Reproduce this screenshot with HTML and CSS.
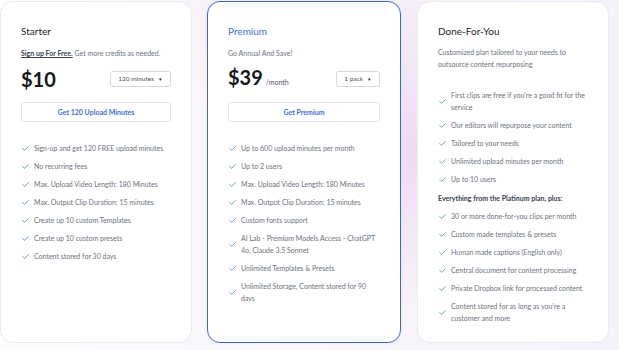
FILE: index.html
```html
<!DOCTYPE html>
<html>
<head>
<meta charset="utf-8">
<link rel="stylesheet" href="styles.css">
</head>
<body>
<div class="plans">
  <div class="card">
    <div class="name">Starter</div>
    <div class="sub"><span class="signup">Sign up For Free.</span> Get more credits as needed.</div>
    <div class="price-row">
      <div class="price">$10</div>
      <div class="select">120 minutes <span class="caret">▾</span></div>
    </div>
    <div class="btn">Get 120 Upload Minutes</div>
    <ul class="features">
      <li><svg class="chk" viewBox="0 0 8 6"><path d="M0.6 3.1 L2.9 5.2 L7.4 0.8"/></svg><span>Sign-up and get 120 FREE upload minutes</span></li>
      <li><svg class="chk" viewBox="0 0 8 6"><path d="M0.6 3.1 L2.9 5.2 L7.4 0.8"/></svg><span>No recurring fees</span></li>
      <li><svg class="chk" viewBox="0 0 8 6"><path d="M0.6 3.1 L2.9 5.2 L7.4 0.8"/></svg><span>Max. Upload Video Length: 180 Minutes</span></li>
      <li><svg class="chk" viewBox="0 0 8 6"><path d="M0.6 3.1 L2.9 5.2 L7.4 0.8"/></svg><span>Max. Output Clip Duration: 15 minutes</span></li>
      <li><svg class="chk" viewBox="0 0 8 6"><path d="M0.6 3.1 L2.9 5.2 L7.4 0.8"/></svg><span>Create up 10 custom Templates</span></li>
      <li><svg class="chk" viewBox="0 0 8 6"><path d="M0.6 3.1 L2.9 5.2 L7.4 0.8"/></svg><span>Create up 10 custom presets</span></li>
      <li><svg class="chk" viewBox="0 0 8 6"><path d="M0.6 3.1 L2.9 5.2 L7.4 0.8"/></svg><span>Content stored for 30 days</span></li>
    </ul>
  </div>
  <div class="card featured">
    <div class="name blue">Premium</div>
    <div class="sub">Go Annual And Save!</div>
    <div class="price-row">
      <div class="price">$39<span class="per">/month</span></div>
      <div class="select">1 pack <span class="caret">▾</span></div>
    </div>
    <div class="btn">Get Premium</div>
    <ul class="features">
      <li><svg class="chk" viewBox="0 0 8 6"><path d="M0.6 3.1 L2.9 5.2 L7.4 0.8"/></svg><span>Up to 600 upload minutes per month</span></li>
      <li><svg class="chk" viewBox="0 0 8 6"><path d="M0.6 3.1 L2.9 5.2 L7.4 0.8"/></svg><span>Up to 2 users</span></li>
      <li><svg class="chk" viewBox="0 0 8 6"><path d="M0.6 3.1 L2.9 5.2 L7.4 0.8"/></svg><span>Max. Upload Video Length: 180 Minutes</span></li>
      <li><svg class="chk" viewBox="0 0 8 6"><path d="M0.6 3.1 L2.9 5.2 L7.4 0.8"/></svg><span>Max. Output Clip Duration: 15 minutes</span></li>
      <li><svg class="chk" viewBox="0 0 8 6"><path d="M0.6 3.1 L2.9 5.2 L7.4 0.8"/></svg><span>Custom fonts support</span></li>
      <li><svg class="chk" viewBox="0 0 8 6"><path d="M0.6 3.1 L2.9 5.2 L7.4 0.8"/></svg><span>AI Lab - Premium Models Access - ChatGPT 4o, Claude 3.5 Sonnet</span></li>
      <li><svg class="chk" viewBox="0 0 8 6"><path d="M0.6 3.1 L2.9 5.2 L7.4 0.8"/></svg><span>Unlimited Templates &amp; Presets</span></li>
      <li><svg class="chk" viewBox="0 0 8 6"><path d="M0.6 3.1 L2.9 5.2 L7.4 0.8"/></svg><span>Unlimited Storage, Content stored for 90 days</span></li>
    </ul>
  </div>
  <div class="card">
    <div class="name">Done-For-You</div>
    <div class="sub desc">Customized plan tailored to your needs to outsource content repurposing</div>
    <ul class="features dfy">
      <li><svg class="chk" viewBox="0 0 8 6"><path d="M0.6 3.1 L2.9 5.2 L7.4 0.8"/></svg><span>First clips are free if you're a good fit for the service</span></li>
      <li><svg class="chk" viewBox="0 0 8 6"><path d="M0.6 3.1 L2.9 5.2 L7.4 0.8"/></svg><span>Our editors will repurpose your content</span></li>
      <li><svg class="chk" viewBox="0 0 8 6"><path d="M0.6 3.1 L2.9 5.2 L7.4 0.8"/></svg><span>Tailored to your needs</span></li>
      <li><svg class="chk" viewBox="0 0 8 6"><path d="M0.6 3.1 L2.9 5.2 L7.4 0.8"/></svg><span>Unlimited upload minutes per month</span></li>
      <li><svg class="chk" viewBox="0 0 8 6"><path d="M0.6 3.1 L2.9 5.2 L7.4 0.8"/></svg><span>Up to 10 users</span></li>
      <li class="heading">Everything from the Platinum plan, plus:</li>
      <li><svg class="chk" viewBox="0 0 8 6"><path d="M0.6 3.1 L2.9 5.2 L7.4 0.8"/></svg><span>30 or more done-for-you clips per month</span></li>
      <li><svg class="chk" viewBox="0 0 8 6"><path d="M0.6 3.1 L2.9 5.2 L7.4 0.8"/></svg><span>Custom made templates &amp; presets</span></li>
      <li><svg class="chk" viewBox="0 0 8 6"><path d="M0.6 3.1 L2.9 5.2 L7.4 0.8"/></svg><span>Human made captions (English only)</span></li>
      <li><svg class="chk" viewBox="0 0 8 6"><path d="M0.6 3.1 L2.9 5.2 L7.4 0.8"/></svg><span>Central document for content processing</span></li>
      <li><svg class="chk" viewBox="0 0 8 6"><path d="M0.6 3.1 L2.9 5.2 L7.4 0.8"/></svg><span>Private Dropbox link for processed content</span></li>
      <li><svg class="chk" viewBox="0 0 8 6"><path d="M0.6 3.1 L2.9 5.2 L7.4 0.8"/></svg><span>Content stored for as long as you're a customer and more</span></li>
    </ul>
  </div>
</div>
</body>
</html>
```

FILE: styles.css
```css
html, body {
  margin: 0;
  padding: 0;
}
body {
  width: 619px;
  height: 350px;
  overflow: hidden;
  font-family: Lato, "Noto Sans", sans-serif;
  color: #111827;
  background:
    radial-gradient(ellipse 90px 160px at 410px 150px, rgba(236, 210, 236, 0.75), rgba(236, 210, 236, 0) 100%),
    radial-gradient(ellipse 160px 120px at 300px 20px, rgba(240, 228, 246, 0.7), rgba(240, 228, 246, 0) 100%),
    linear-gradient(90deg, #fdfcfe 0%, #f8f4fb 60%, #f4f3fc 100%);
}
.plans {
  display: flex;
  align-items: stretch;
  gap: 15px;
  padding-top: 1px;
  height: 342px;
}
.card {
  width: 192px;
  box-sizing: border-box;
  background: #ffffff;
  border: 1px solid #eceaf0;
  border-radius: 13px;
  padding: 23px 20px 0 20px;
  display: flex;
  flex-direction: column;
}
.card.featured {
  width: 194px;
  border: 1px solid #3467e4;
}
.card:last-child {
  width: 192px;
  margin-left: 1px;
}
.name {
  font-size: 10px;
  line-height: 12px;
  font-weight: 400;
  color: #1f2128;
}
.name.blue {
  color: #3b6fe6;
}
.sub {
  margin-top: 10px;
  font-size: 7px;
  line-height: 12px;
  color: #6b7280;
}
.signup {
  color: #374151;
  font-weight: 700;
  text-decoration: underline;
}
.desc {
  line-height: 11.5px;
}
.price-row {
  display: flex;
  align-items: center;
  justify-content: space-between;
  margin-top: 8px;
  height: 24px;
}
.price {
  font-size: 20px;
  line-height: 24px;
  font-weight: 700;
  color: #15171c;
}
.per {
  font-size: 7px;
  font-weight: 400;
  color: #4b5563;
  margin-left: 3px;
}
.select {
  box-sizing: border-box;
  height: 16px;
  padding: 0 8px 0 7px;
  border: 1px solid #d6d8dd;
  border-radius: 3px;
  font-size: 6.5px;
  line-height: 14px;
  color: #4b5563;
  display: flex;
  align-items: center;
  justify-content: space-between;
  gap: 5px;
}
.caret {
  font-size: 5px;
  color: #111827;
}
.btn {
  margin-top: 11px;
  height: 20px;
  box-sizing: border-box;
  border: 1px solid #dbe6f7;
  border-radius: 2px;
  display: flex;
  align-items: center;
  justify-content: center;
  font-size: 7px;
  font-weight: 700;
  color: #3b6fe0;
}
.features {
  list-style: none;
  margin: 20px 0 0 0;
  padding: 0;
  display: flex;
  flex-direction: column;
  gap: 6px;
}
.features.dfy {
  margin-top: 19px;
}
.features li {
  display: flex;
  align-items: center;
  gap: 5px;
  font-size: 7px;
  line-height: 12px;
  color: #6b7280;
  padding-left: 1px;
}
.features li.heading {
  font-weight: 700;
  color: #374151;
  padding-left: 0;
  margin-top: 1px;
}
.chk {
  flex: 0 0 7px;
  width: 7px;
  height: 5px;
  fill: none;
  stroke: #3b7be8;
  stroke-width: 0.9;
  stroke-linecap: round;
  stroke-linejoin: round;
}
```
